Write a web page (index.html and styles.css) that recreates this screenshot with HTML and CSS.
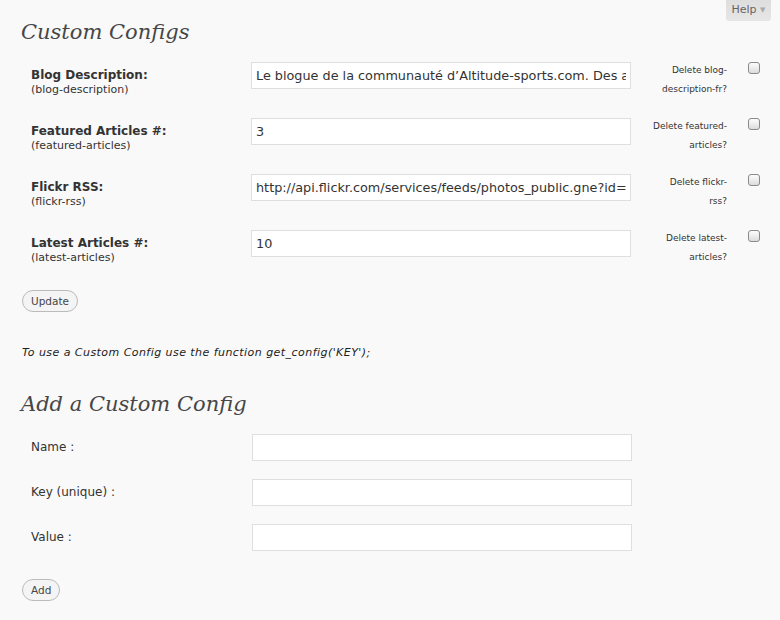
FILE: index.html
```html
<!DOCTYPE html>
<html>
<head>
<meta charset="utf-8">
<link rel="stylesheet" href="styles.css">
</head>
<body>
<div class="help-tab">Help <span class="arrow">▼</span></div>
<div class="wrap">
  <h2 class="title">Custom Configs</h2>
  <div class="rows">
    <div class="row">
      <div class="label"><strong>Blog Description:</strong><span class="key">(blog-description)</span></div>
      <div class="field"><input class="text" type="text" value="Le blogue de la communauté d’Altitude-sports.com. Des articles"></div>
      <div class="del">Delete blog-<br>description-fr?</div>
      <div class="chk"><input class="check" type="checkbox"></div>
    </div>
    <div class="row">
      <div class="label"><strong>Featured Articles #:</strong><span class="key">(featured-articles)</span></div>
      <div class="field"><input class="text" type="text" value="3"></div>
      <div class="del">Delete featured-<br>articles?</div>
      <div class="chk"><input class="check" type="checkbox"></div>
    </div>
    <div class="row">
      <div class="label"><strong>Flickr RSS:</strong><span class="key">(flickr-rss)</span></div>
      <div class="field"><input class="text" type="text" value="http://api.flickr.com/services/feeds/photos_public.gne?id=123"></div>
      <div class="del">Delete flickr-<br>rss?</div>
      <div class="chk"><input class="check" type="checkbox"></div>
    </div>
    <div class="row">
      <div class="label"><strong>Latest Articles #:</strong><span class="key">(latest-articles)</span></div>
      <div class="field"><input class="text" type="text" value="10"></div>
      <div class="del">Delete latest-<br>articles?</div>
      <div class="chk"><input class="check" type="checkbox"></div>
    </div>
  </div>
  <button class="btn btn-update">Update</button>
  <p class="note">To use a Custom Config use the function get_config('KEY');</p>
  <h2 class="title title-add">Add a Custom Config</h2>
  <div class="add-rows">
    <div class="add-row">
      <div class="add-label">Name :</div>
      <input class="text" type="text">
    </div>
    <div class="add-row">
      <div class="add-label">Key (unique) :</div>
      <input class="text" type="text">
    </div>
    <div class="add-row">
      <div class="add-label">Value :</div>
      <input class="text" type="text">
    </div>
  </div>
  <button class="btn btn-add">Add</button>
</div>
</body>
</html>
```

FILE: styles.css
```css
* { box-sizing: border-box; }
html, body { margin: 0; padding: 0; }
body {
  background: #f9f9f9;
  font-family: "DejaVu Sans", sans-serif;
  color: #333;
  width: 780px;
  height: 620px;
  overflow: hidden;
  position: relative;
}
.help-tab {
  position: absolute;
  top: 0;
  left: 726px;
  width: 45px;
  height: 21px;
  background: linear-gradient(#dedede, #e6e6e6);
  border-radius: 0 0 3px 3px;
  font-size: 11px;
  color: #666;
  text-align: center;
  line-height: 19px;
}
.help-tab .arrow { font-size: 7px; color: #aaa; vertical-align: 1px; }
.wrap { padding-left: 21px; padding-top: 17px; }
.title {
  margin: 0;
  font-family: "DejaVu Serif", serif;
  font-style: italic;
  font-weight: normal;
  font-size: 21px;
  line-height: 30px;
  color: #464646;
}
.rows { margin-top: 15px; }
.row {
  display: grid;
  grid-template-columns: 220px 380px 96px 13px;
  column-gap: 0;
  padding-left: 10px;
  height: 56px;
}
.label { padding-top: 6px; }
.label strong { display: block; font-size: 12px; line-height: 15px; color: #333; }
.label .key { display: block; font-size: 11px; line-height: 13px; color: #333; }
.text {
  display: block;
  width: 380px;
  height: 27px;
  border: 1px solid #dfdfdf;
  background: #fff;
  padding: 0 4px;
  font-family: "DejaVu Sans", sans-serif;
  font-size: 12.8px;
  color: #333;
  outline: none;
  border-radius: 0;
}
.del {
  text-align: right;
  font-size: 9px;
  line-height: 19px;
  margin-top: -1px;
  color: #333;
}
.chk { margin-left: 21px; }
.check {
  appearance: none;
  -webkit-appearance: none;
  margin: 0;
  display: block;
  width: 12px;
  height: 12px;
  border: 1px solid #8a8a8a;
  border-radius: 3px;
  background: linear-gradient(#fdfdfd, #dcdcdc);
}
.btn {
  display: block;
  font-family: "DejaVu Sans", sans-serif;
  font-size: 10.5px;
  color: #464646;
  background: #f4f4f4;
  border: 1px solid #bbb;
  border-radius: 11px;
  height: 22px;
  padding: 0 8px;
  margin: 0 0 0 1px;
}
.btn-update { margin-top: 4px; }
.note {
  margin: 34px 0 0 1px;
  font-size: 11px;
  letter-spacing: 0.45px;
  font-style: italic;
  color: #222;
}
.title-add { margin-top: 30px; }
.add-rows { margin-top: 15px; }
.add-row {
  display: grid;
  grid-template-columns: 221px 380px;
  padding-left: 10px;
  height: 45px;
  align-items: start;
}
.add-label { font-size: 12px; line-height: 27px; color: #333; }
.btn-add { margin-top: 10px; }
```
